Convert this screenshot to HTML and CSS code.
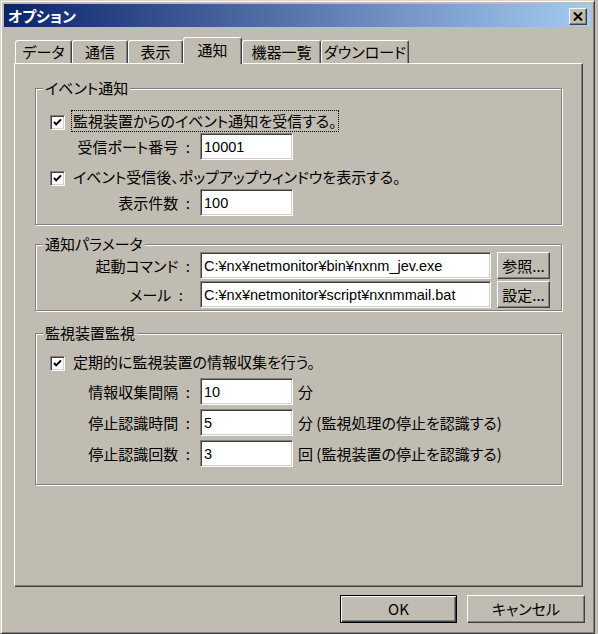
FILE: index.html
```html
<!DOCTYPE html>
<html lang="ja">
<head>
<meta charset="utf-8">
<title>オプション</title>
<link rel="stylesheet" href="styles.css">
</head>
<body>
<div class="window">
  <div class="titlebar">
    <span class="title">オプション</span>
    <span class="close-btn"><svg width="10" height="9" viewBox="0 0 10 9"><path d="M1 0.5 L9 8.5 M9 0.5 L1 8.5" stroke="#000" stroke-width="2" fill="none"/></svg></span>
  </div>
  <div class="client">
    <div class="tabs">
      <div class="tab">データ</div>
      <div class="tab">通信</div>
      <div class="tab">表示</div>
      <div class="tab tab-active">通知</div>
      <div class="tab">機器一覧</div>
      <div class="tab">ダウンロード</div>
    </div>
    <div class="panel">
      <div class="group group-event">
        <span class="group-title">イベント通知</span>
        <div class="row row-check ev-check1">
          <span class="checkbox"><svg width="13" height="13" viewBox="0 0 13 13"><polyline points="3,6 5.2,8.4 10,3.4" stroke="#000" stroke-width="2" fill="none"/></svg></span>
          <span class="check-label focused">監視装置からのイベント通知を受信する。</span>
        </div>
        <div class="row row-field ev-field1">
          <span class="field-label">受信ポート番号&#8194;:</span>
          <span class="input input-num">10001</span>
        </div>
        <div class="row row-check ev-check2">
          <span class="checkbox"><svg width="13" height="13" viewBox="0 0 13 13"><polyline points="3,6 5.2,8.4 10,3.4" stroke="#000" stroke-width="2" fill="none"/></svg></span>
          <span class="check-label">イベント受信後、ポップアップウィンドウを表示する。</span>
        </div>
        <div class="row row-field ev-field2">
          <span class="field-label">表示件数&#8194;:</span>
          <span class="input input-num">100</span>
        </div>
      </div>

      <div class="group group-param">
        <span class="group-title">通知パラメータ</span>
        <div class="row row-field">
          <span class="field-label">起動コマンド&#8194;:</span>
          <span class="input input-path">C:¥nx¥netmonitor¥bin¥nxnm_jev.exe</span>
          <span class="btn">参照...</span>
        </div>
        <div class="row row-field pm-field2">
          <span class="field-label label-mail">メール&#8194;:</span>
          <span class="input input-path">C:¥nx¥netmonitor¥script¥nxnmmail.bat</span>
          <span class="btn">設定...</span>
        </div>
      </div>

      <div class="group group-watch">
        <span class="group-title">監視装置監視</span>
        <div class="row row-check">
          <span class="checkbox"><svg width="13" height="13" viewBox="0 0 13 13"><polyline points="3,6 5.2,8.4 10,3.4" stroke="#000" stroke-width="2" fill="none"/></svg></span>
          <span class="check-label">定期的に監視装置の情報収集を行う。</span>
        </div>
        <div class="row row-field wt-field1">
          <span class="field-label">情報収集間隔&#8194;:</span>
          <span class="input input-num">10</span>
          <span class="unit">分</span>
        </div>
        <div class="row row-field wt-field">
          <span class="field-label">停止認識時間&#8194;:</span>
          <span class="input input-num">5</span>
          <span class="unit">分 (監視処理の停止を認識する)</span>
        </div>
        <div class="row row-field wt-field">
          <span class="field-label">停止認識回数&#8194;:</span>
          <span class="input input-num">3</span>
          <span class="unit">回 (監視装置の停止を認識する)</span>
        </div>
      </div>
    </div>
    <div class="footer">
      <span class="dlg-btn dlg-default">OK</span>
      <span class="dlg-btn">キャンセル</span>
    </div>
  </div>
</div>
</body>
</html>
```
FILE: styles.css
```css
* { box-sizing: border-box; }
html, body { margin: 0; padding: 0; }
body {
  width: 598px;
  height: 634px;
  overflow: hidden;
  background: #c0bcb1;
  font-family: "Noto Sans CJK JP", "Noto Sans", sans-serif;
  font-size: 15px;
  line-height: 18px;
  color: #000;
  font-feature-settings: "palt";
}
.window {
  width: 595px;
  height: 634px;
  border: 1px solid;
  border-color: #d8d4c8 #404040 #404040 #d8d4c8;
  box-shadow: inset 1px 1px 0 #fff, inset -1px -1px 0 #808080;
  padding: 3px;
  display: flex;
  flex-direction: column;
  background: #c0bcb1;
}
.titlebar {
  height: 23px;
  flex: none;
  background: linear-gradient(to right, #0a246a, #a6caf0);
  display: flex;
  align-items: center;
  justify-content: space-between;
  padding: 0 4px 0 4px;
}
.title {
  color: #fff;
  font-weight: bold;
}
.close-btn {
  width: 18px;
  height: 17px;
  margin-top: 2px;
  background: #c0bcb1;
  border: 1px solid;
  border-color: #fff #404040 #404040 #fff;
  box-shadow: inset -1px -1px 0 #808080;
  display: flex;
  align-items: center;
  justify-content: center;
}
.client {
  padding: 10px 8px 0 10px;
}
.tabs {
  display: grid;
  grid-template-columns: 57px 56px 55px 59px 79px 88px;
  height: 26px;
  align-items: end;
  padding-left: 1px;
}
.tab {
  height: 23px;
  border: 1px solid;
  border-bottom: 0;
  border-color: #fff #404040 transparent #fff;
  box-shadow: inset -1px 0 0 #808080;
  border-radius: 3px 3px 0 0;
  display: flex;
  align-items: center;
  justify-content: center;
  white-space: nowrap;
  background: #c0bcb1;
}
.tab-active {
  height: 27px;
  margin-bottom: -1px;
  padding-bottom: 3px;
  position: relative;
  z-index: 1;
}
.panel {
  height: 524px;
  border: 1px solid;
  border-color: #fff #404040 #404040 #fff;
  box-shadow: inset -1px -1px 0 #808080;
  padding: 24px 20px 0 20px;
}
.group {
  position: relative;
  border: 1px solid #808080;
  box-shadow: inset 1px 1px 0 #fff, 1px 1px 0 #fff;
  padding: 0 14px;
}
.group-title {
  position: absolute;
  top: -10px;
  left: 7px;
  padding: 0 2px;
  background: #c0bcb1;
  line-height: 18px;
  white-space: nowrap;
}
.group-event { padding-top: 21px; padding-bottom: 8px; }
.group-param { margin-top: 19px; padding-top: 7px; padding-bottom: 2px; }
.group-watch { margin-top: 22px; padding-top: 17px; padding-bottom: 17px; }

.row {
  display: flex;
  align-items: center;
}
.row-check { height: 22px; }
.row-field { height: 27px; }
.ev-field1 { margin-top: 1px; }
.ev-check2 { margin-top: 6px; }
.ev-field2 { margin-top: 1px; }
.pm-field2 { margin-top: 2px; }
.wt-field1 { margin-top: 5px; }
.wt-field { margin-top: 4px; }

.checkbox {
  flex: none;
  width: 15px;
  height: 15px;
  margin-top: 2px;
  background: #fff;
  border: 1px solid;
  border-color: #808080 #fff #fff #808080;
  box-shadow: inset 1px 1px 0 #404040, inset -1px -1px 0 #d4d0c8;
  display: flex;
  margin-right: 7px;
}
.check-label {
  padding: 1px 1px;
  white-space: nowrap;
}
.focused {
  outline: 1px dotted #000;
}
.field-label {
  flex: none;
  width: 140px;
  margin-right: 10px;
  text-align: right;
  white-space: nowrap;
}
.label-mail { padding-right: 7px; }
.input {
  flex: none;
  height: 27px;
  background: #fff;
  border: 1px solid;
  border-color: #808080 #fff #fff #808080;
  box-shadow: inset 1px 1px 0 #404040, inset -1px -1px 0 #d4d0c8;
  padding-left: 3px;
  display: flex;
  align-items: center;
  font-family: "Liberation Sans", Arial, sans-serif;
  font-size: 14.5px;
  font-feature-settings: normal;
  white-space: nowrap;
  overflow: hidden;
}
.input-num { width: 93px; }
.input-path { width: 291px; }
.btn {
  flex: none;
  width: 53px;
  height: 27px;
  margin-left: 6px;
  border: 1px solid;
  border-color: #fff #404040 #404040 #fff;
  box-shadow: inset -1px -1px 0 #808080;
  display: flex;
  align-items: center;
  justify-content: center;
  white-space: nowrap;
}
.unit {
  margin-left: 5px;
  white-space: nowrap;
}
.footer {
  display: flex;
  justify-content: flex-end;
  gap: 10px;
  margin-top: 8px;
  margin-right: -2px;
}
.dlg-btn {
  width: 118px;
  height: 28px;
  border: 1px solid;
  border-color: #fff #404040 #404040 #fff;
  box-shadow: inset -1px -1px 0 #808080;
  display: flex;
  align-items: center;
  justify-content: center;
}
.dlg-default {
  width: 117px;
  border-color: #000;
  box-shadow: inset 1px 1px 0 #fff, inset -1px -1px 0 #404040, inset -2px -2px 0 #808080;
}
```
